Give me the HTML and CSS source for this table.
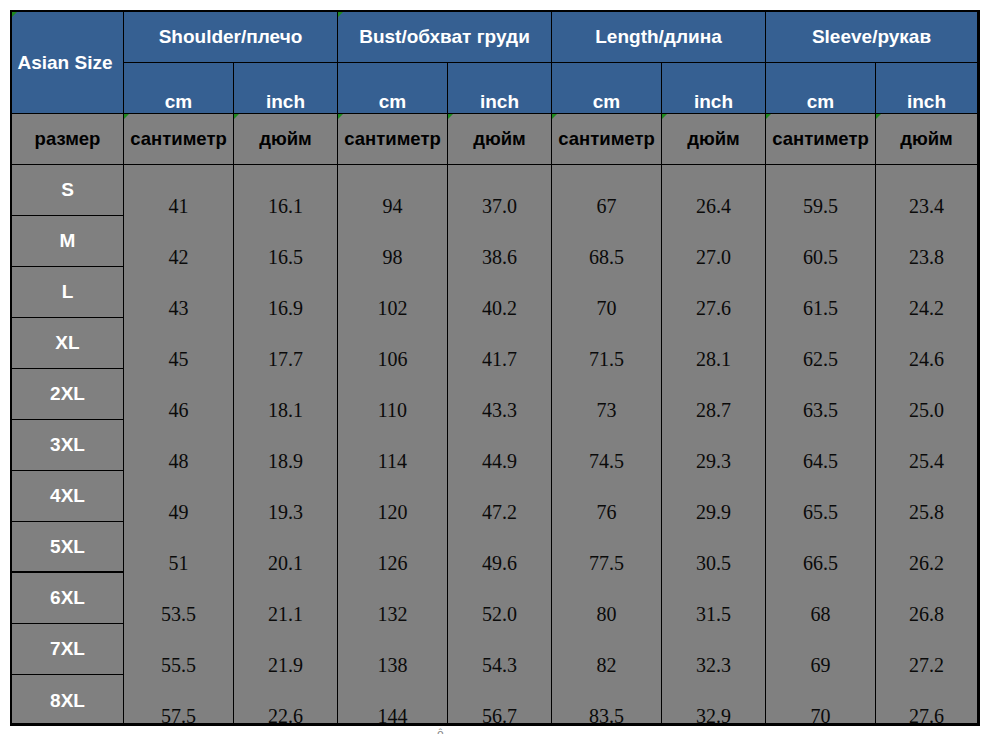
FILE: index.html
```html
<!DOCTYPE html>
<html>
<head>
<meta charset="utf-8">
<link rel="stylesheet" href="styles.css">
</head>
<body>
<div class="chart">
  <div class="hd span-rows mark">Asian Size</div>
  <div class="hd span-cols">Shoulder/плечо</div>
  <div class="hd span-cols mark">Bust/обхват груди</div>
  <div class="hd span-cols">Length/длина</div>
  <div class="hd span-cols last">Sleeve/рукав</div>

  <div class="hd unit">cm</div><div class="hd unit">inch</div>
  <div class="hd unit">cm</div><div class="hd unit">inch</div>
  <div class="hd unit">cm</div><div class="hd unit">inch</div>
  <div class="hd unit">cm</div><div class="hd unit last">inch</div>

  <div class="ru">размер</div>
  <div class="ru mark">сантиметр</div><div class="ru mark">дюйм</div>
  <div class="ru mark">сантиметр</div><div class="ru mark">дюйм</div>
  <div class="ru mark">сантиметр</div><div class="ru mark">дюйм</div>
  <div class="ru mark">сантиметр</div><div class="ru mark last">дюйм</div>

  <div class="size">S</div><div class="v">41</div><div class="v">16.1</div><div class="v">94</div><div class="v">37.0</div><div class="v">67</div><div class="v">26.4</div><div class="v">59.5</div><div class="v last">23.4</div>
  <div class="size">M</div><div class="v">42</div><div class="v">16.5</div><div class="v">98</div><div class="v">38.6</div><div class="v">68.5</div><div class="v">27.0</div><div class="v">60.5</div><div class="v last">23.8</div>
  <div class="size">L</div><div class="v">43</div><div class="v">16.9</div><div class="v">102</div><div class="v">40.2</div><div class="v">70</div><div class="v">27.6</div><div class="v">61.5</div><div class="v last">24.2</div>
  <div class="size">XL</div><div class="v">45</div><div class="v">17.7</div><div class="v">106</div><div class="v">41.7</div><div class="v">71.5</div><div class="v">28.1</div><div class="v">62.5</div><div class="v last">24.6</div>
  <div class="size">2XL</div><div class="v">46</div><div class="v">18.1</div><div class="v">110</div><div class="v">43.3</div><div class="v">73</div><div class="v">28.7</div><div class="v">63.5</div><div class="v last">25.0</div>
  <div class="size">3XL</div><div class="v">48</div><div class="v">18.9</div><div class="v">114</div><div class="v">44.9</div><div class="v">74.5</div><div class="v">29.3</div><div class="v">64.5</div><div class="v last">25.4</div>
  <div class="size">4XL</div><div class="v">49</div><div class="v">19.3</div><div class="v">120</div><div class="v">47.2</div><div class="v">76</div><div class="v">29.9</div><div class="v">65.5</div><div class="v last">25.8</div>
  <div class="size thick">5XL</div><div class="v">51</div><div class="v">20.1</div><div class="v">126</div><div class="v">49.6</div><div class="v">77.5</div><div class="v">30.5</div><div class="v">66.5</div><div class="v last">26.2</div>
  <div class="size">6XL</div><div class="v">53.5</div><div class="v">21.1</div><div class="v">132</div><div class="v">52.0</div><div class="v">80</div><div class="v">31.5</div><div class="v">68</div><div class="v last">26.8</div>
  <div class="size">7XL</div><div class="v">55.5</div><div class="v">21.9</div><div class="v">138</div><div class="v">54.3</div><div class="v">82</div><div class="v">32.3</div><div class="v">69</div><div class="v last">27.2</div>
  <div class="size end">8XL</div><div class="v">57.5</div><div class="v">22.6</div><div class="v">144</div><div class="v">56.7</div><div class="v">83.5</div><div class="v">32.9</div><div class="v">70</div><div class="v last">27.6</div>
</div>
<div class="note">ô</div>
</body>
</html>
```

FILE: styles.css
```css
html, body {
  margin: 0;
  padding: 0;
  background: #ffffff;
}

.chart {
  margin: 10px 0 0 10px;
  width: 965px;
  border-top: 2px solid #000;
  border-left: 2px solid #000;
  border-right: 3px solid #000;
  border-bottom: 3px solid #000;
  display: grid;
  grid-template-columns: 112px 110px 104px 110px 104px 110px 104px 110px 101px;
  grid-template-rows: 51px 51px 51px repeat(10, 51px) 48px;
  background: #808080;
  font-family: "Liberation Sans", Arial, sans-serif;
}

.chart > div {
  box-sizing: border-box;
  border-right: 1px solid #000;
  position: relative;
  overflow: hidden;
}

.chart > div.last {
  border-right: none;
}

.hd {
  background: #366092;
  color: #ffffff;
  font-weight: bold;
  font-size: 19px;
  line-height: 20px;
  border-bottom: 1px solid #000;
  display: flex;
  align-items: center;
  justify-content: center;
  white-space: nowrap;
}

.span-rows {
  grid-row: span 2;
  padding-right: 5px;
}

.span-cols {
  grid-column: span 2;
}

.hd.unit {
  align-items: flex-end;
  padding-bottom: 1px;
}

.ru {
  background: #808080;
  color: #000;
  font-weight: bold;
  font-size: 18.5px;
  line-height: 20px;
  border-bottom: 1px solid #000;
  display: flex;
  align-items: center;
  justify-content: center;
  white-space: nowrap;
}

.mark::before {
  content: "";
  position: absolute;
  left: 0;
  top: 0;
  width: 0;
  height: 0;
  border-top: 5px solid #1f8a1f;
  border-right: 5px solid transparent;
}

.size {
  color: #ffffff;
  font-weight: bold;
  font-size: 19px;
  line-height: 20px;
  border-bottom: 1px solid #000;
  display: flex;
  align-items: center;
  justify-content: center;
}

.size.thick {
  border-bottom: 2px solid #000;
}

.size.end {
  border-bottom: none;
  align-items: flex-start;
  padding-top: 16px;
}

.v {
  font-family: "Liberation Serif", "Times New Roman", serif;
  font-size: 20px;
  line-height: 20px;
  color: #0a0a0a;
  text-align: center;
  padding-top: 31px;
}

.note {
  margin: 2px 0 0 437px;
  font-family: "DejaVu Sans", sans-serif;
  font-size: 11px;
  line-height: 12px;
  color: #888;
}
```
